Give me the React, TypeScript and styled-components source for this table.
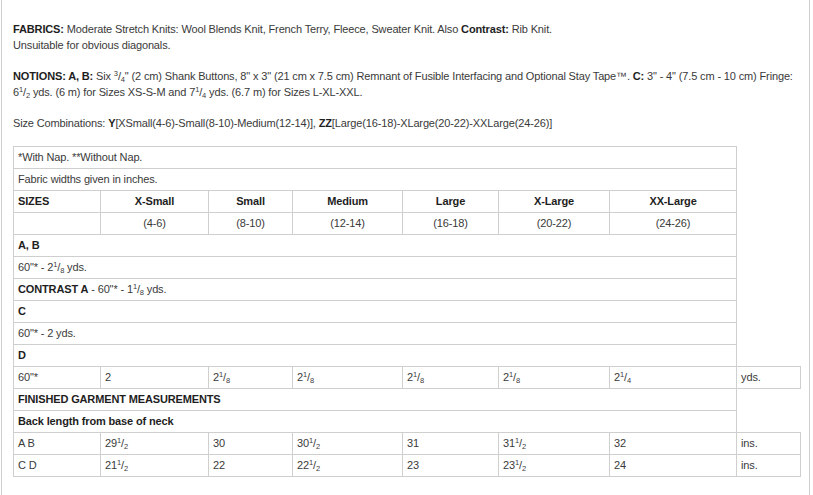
import React from "react";
import styled, { createGlobalStyle } from "styled-components";

const Global = createGlobalStyle`
  html, body { margin: 0; padding: 0; background: #fff; }
  body { font-family: "Liberation Sans", Arial, Helvetica, sans-serif; }
`;

const Page = styled.div`
  margin-left: 1px;
  width: 809px;
  min-height: 495px;
  border-left: 1px solid #cfcfcf;
  border-right: 1px solid #cfcfcf;
  padding: 21px 11px 0 11px;
  box-sizing: border-box;
  color: #3a3a3a;
  font-size: 11px;
  letter-spacing: -0.14px;
`;

const Para = styled.p`
  margin: 0 0 15px 0;
  line-height: 16px;
  white-space: nowrap;
`;

const B = styled.b`
  color: #1e1e1e;
  font-weight: bold;
`;

const Sup = styled.sup`
  font-size: 7.5px;
  vertical-align: 4px;
  line-height: 0;
`;

const Sub = styled.sub`
  font-size: 7.5px;
  vertical-align: -2px;
  line-height: 0;
`;

const Table = styled.table`
  border-collapse: collapse;
  table-layout: fixed;
  width: 787px;
  margin-top: 14px;
`;

const Cell = styled.td<{ $center?: boolean; $bold?: boolean }>`
  border: 1px solid #cfcfcf;
  height: 21px;
  padding: 0 4px;
  line-height: 21px;
  box-sizing: border-box;
  white-space: nowrap;
  overflow: hidden;
  text-align: ${(p) => (p.$center ? "center" : "left")};
  font-weight: ${(p) => (p.$bold ? "bold" : "normal")};
  color: ${(p) => (p.$bold ? "#1e1e1e" : "#3a3a3a")};
  vertical-align: middle;
`;

const Frac = ({ w, n, d }: { w?: string; n: string; d: string }) => (
  <>
    {w}
    <Sup>{n}</Sup>/<Sub>{d}</Sub>
  </>
);

const widths = [87, 108, 84, 110, 96, 111, 127, 64];

const sizes = [
  ["X-Small", "(4-6)"],
  ["Small", "(8-10)"],
  ["Medium", "(12-14)"],
  ["Large", "(16-18)"],
  ["X-Large", "(20-22)"],
  ["XX-Large", "(24-26)"],
];

type V = React.ReactNode;

const DataRow = ({ label, values, unit }: { label: string; values: V[]; unit: string }) => (
  <tr>
    <Cell>{label}</Cell>
    {values.map((v, i) => (
      <Cell key={i}>{v}</Cell>
    ))}
    <Cell>{unit}</Cell>
  </tr>
);

const SpanRow = ({ children, bold }: { children: React.ReactNode; bold?: boolean }) => (
  <tr>
    <Cell colSpan={7} $bold={bold}>
      {children}
    </Cell>
  </tr>
);

export default function App() {
  return (
    <>
      <Global />
      <Page>
        <Para>
          <B>FABRICS:</B> Moderate Stretch Knits: Wool Blends Knit, French Terry, Fleece, Sweater Knit. Also{" "}
          <B>Contrast:</B> Rib Knit.
          <br />
          Unsuitable for obvious diagonals.
        </Para>
        <Para>
          <B>NOTIONS: A, B:</B> Six <Frac n="3" d="4" />" (2 cm) Shank Buttons, 8" x 3" (21 cm x 7.5 cm) Remnant of
          Fusible Interfacing and Optional Stay Tape™. <B>C:</B> 3" - 4" (7.5 cm - 10 cm) Fringe:
          <br />
          <Frac w="6" n="1" d="2" /> yds. (6 m) for Sizes XS-S-M and <Frac w="7" n="1" d="4" /> yds. (6.7 m) for Sizes
          L-XL-XXL.
        </Para>
        <Para>
          Size Combinations: <B>Y</B>[XSmall(4-6)-Small(8-10)-Medium(12-14)], <B>ZZ</B>
          [Large(16-18)-XLarge(20-22)-XXLarge(24-26)]
        </Para>
        <Table>
          <colgroup>
            {widths.map((w, i) => (
              <col key={i} style={{ width: w }} />
            ))}
          </colgroup>
          <tbody>
            <SpanRow>*With Nap. **Without Nap.</SpanRow>
            <SpanRow>Fabric widths given in inches.</SpanRow>
            <tr>
              <Cell $bold>SIZES</Cell>
              {sizes.map(([s]) => (
                <Cell key={s} $bold $center>
                  {s}
                </Cell>
              ))}
            </tr>
            <tr>
              <Cell />
              {sizes.map(([s, r]) => (
                <Cell key={s} $center>
                  {r}
                </Cell>
              ))}
            </tr>
            <SpanRow bold>A, B</SpanRow>
            <SpanRow>
              60"* - <Frac w="2" n="1" d="8" /> yds.
            </SpanRow>
            <SpanRow>
              <B>CONTRAST A</B> - 60"* - <Frac w="1" n="1" d="8" /> yds.
            </SpanRow>
            <SpanRow bold>C</SpanRow>
            <SpanRow>60"* - 2 yds.</SpanRow>
            <SpanRow bold>D</SpanRow>
            <DataRow
              label={'60"*'}
              values={[
                "2",
                <Frac w="2" n="1" d="8" />,
                <Frac w="2" n="1" d="8" />,
                <Frac w="2" n="1" d="8" />,
                <Frac w="2" n="1" d="8" />,
                <Frac w="2" n="1" d="4" />,
              ]}
              unit="yds."
            />
            <SpanRow bold>FINISHED GARMENT MEASUREMENTS</SpanRow>
            <SpanRow bold>Back length from base of neck</SpanRow>
            <DataRow
              label="A B"
              values={[
                <Frac w="29" n="1" d="2" />,
                "30",
                <Frac w="30" n="1" d="2" />,
                "31",
                <Frac w="31" n="1" d="2" />,
                "32",
              ]}
              unit="ins."
            />
            <DataRow
              label="C D"
              values={[
                <Frac w="21" n="1" d="2" />,
                "22",
                <Frac w="22" n="1" d="2" />,
                "23",
                <Frac w="23" n="1" d="2" />,
                "24",
              ]}
              unit="ins."
            />
          </tbody>
        </Table>
      </Page>
    </>
  );
}
